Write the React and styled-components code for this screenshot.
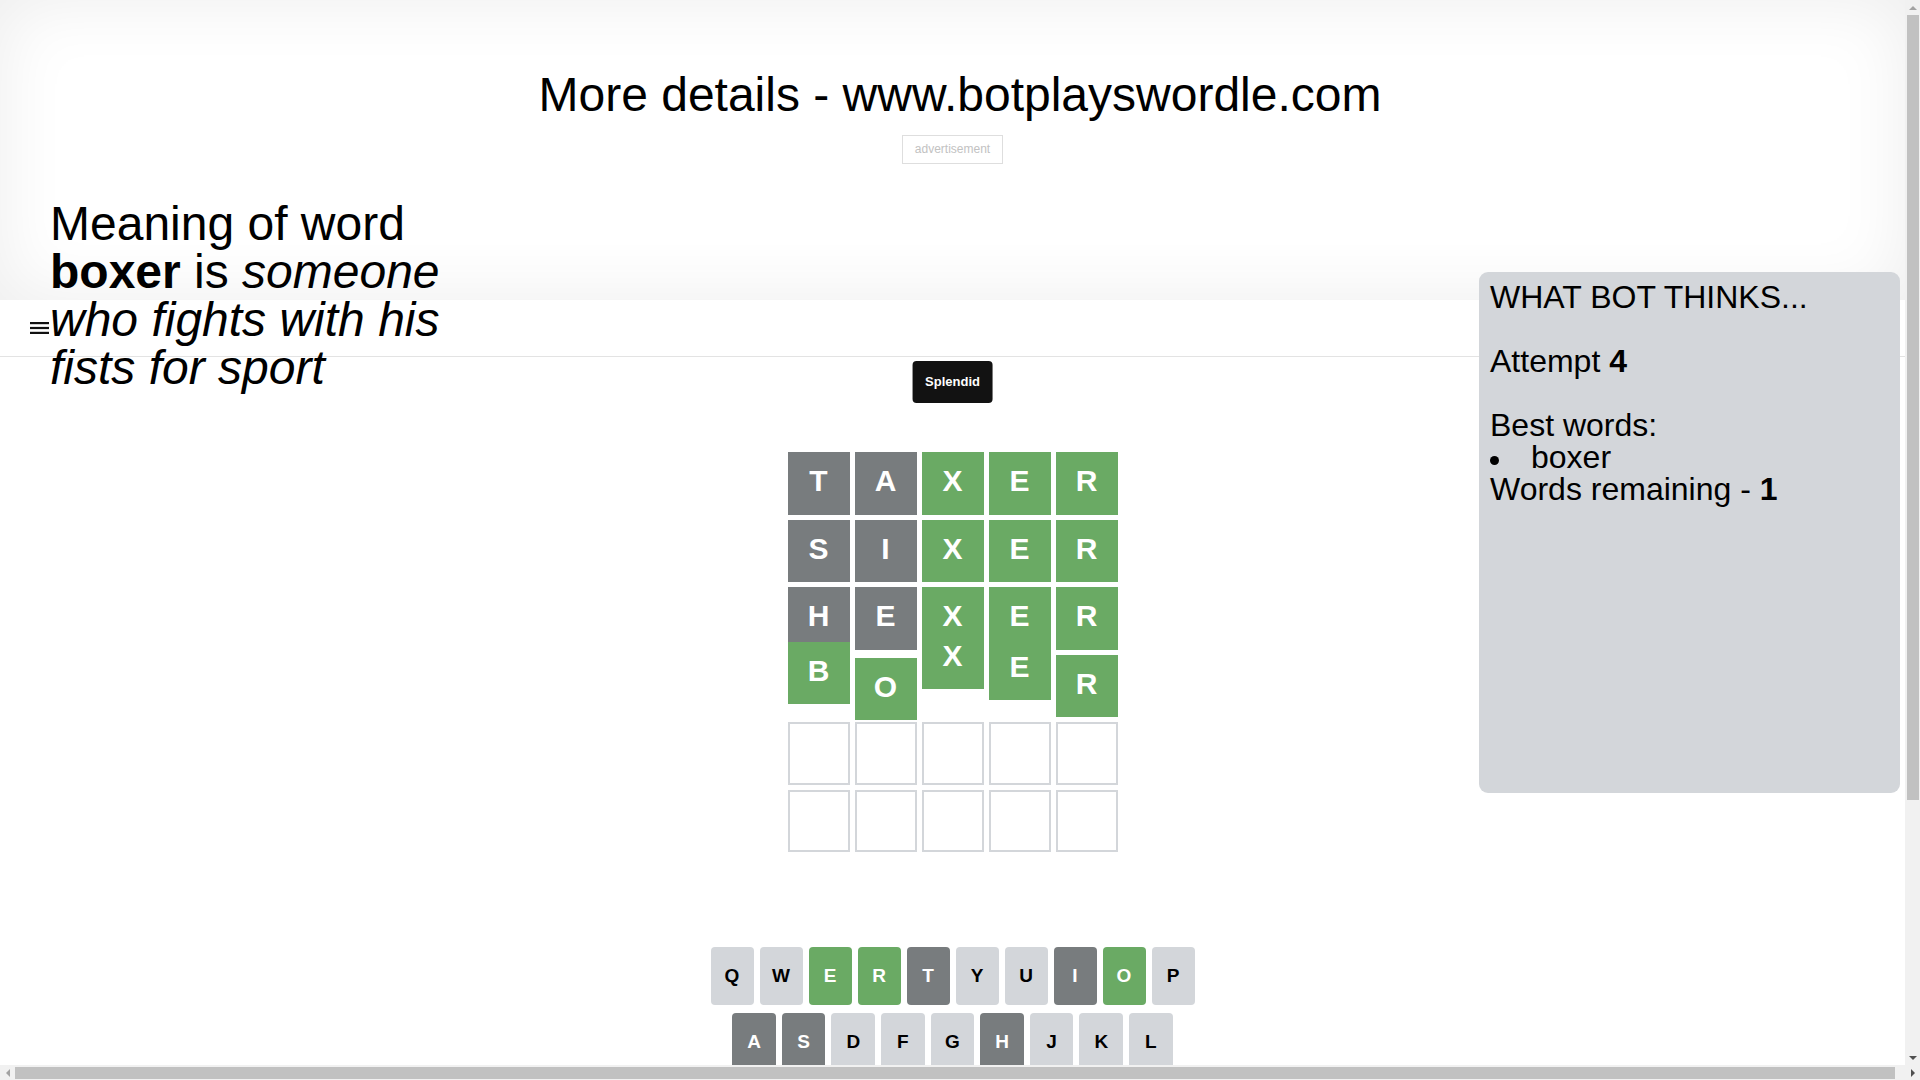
import React from 'react';
import styled, {createGlobalStyle} from 'styled-components';

const GlobalStyle = createGlobalStyle`
  body {
    margin: 0;
    font-family: "Liberation Sans", Arial, sans-serif;
    color: #000;
    background: #fff;
    overflow-x: hidden;
  }
`;

// page area as it sits beside the browser's vertical scrollbar
const Page = styled.div`
  position: relative;
  width: calc(100vw - 15px);
`;

const Header = styled.header`
  height: 300px;
  box-sizing: border-box;
  padding-top: 67px;
  display: flex;
  flex-direction: column;
  align-items: center;
  box-shadow: inset 0 0 70px rgba(0, 0, 0, 0.075);
`;

const Title = styled.h1`
  align-self: flex-start;
  width: 100vw;
  margin: 0;
  text-align: center;
  font-size: 48px;
  font-weight: 400;
  line-height: normal;
`;

const AdBox = styled.div`
  margin-top: 13px;
  padding: 6px 12px;
  border: 1px solid #dedede;
  color: #c2c2c2;
  font-size: 12px;
  line-height: 15px;
`;

const Meaning = styled.h2`
  position: absolute;
  top: 200px;
  left: 50px;
  width: 420px;
  margin: 0;
  font-size: 48px;
  font-weight: 400;
  line-height: 48px;

  b {
    font-weight: 700;
  }
`;

const Nav = styled.nav`
  height: 56px;
  border-bottom: 1px solid #e3e3e3;
  display: flex;
  align-items: center;
  padding-left: 30px;
`;

const BotPanel = styled.aside`
  position: absolute;
  top: 272px;
  right: 5px;
  width: 421px;
  height: 521px;
  box-sizing: border-box;
  padding: 9px 11px;
  background: #d3d6da;
  border-radius: 9px;
  font-size: 32px;
  line-height: 32px;

  ul {
    margin: 0;
    padding-left: 41px;
    list-style: none;
  }

  li {
    position: relative;
  }

  li::before {
    content: '';
    position: absolute;
    left: -41px;
    top: 15px;
    width: 9px;
    height: 9px;
    border-radius: 50%;
    background: #000;
  }
`;

const Toast = styled.div`
  position: absolute;
  top: 361px;
  left: 50%;
  transform: translateX(-50%);
  background: #121212;
  color: #fff;
  font-size: 13px;
  font-weight: 700;
  line-height: 16px;
  padding: 13px;
  border-radius: 4px;
`;

const Game = styled.main`
  display: flex;
  flex-direction: column;
  padding-bottom: 258px;
`;

const BoardArea = styled.div`
  height: 590px;
  display: flex;
  align-items: center;
  justify-content: center;
`;

const Board = styled.div`
  width: 330px;
  height: 400px;
  display: grid;
  grid-template-rows: repeat(6, 1fr);
  gap: 5px;
`;

const BoardRow = styled.div`
  display: grid;
  grid-template-columns: repeat(5, 1fr);
  gap: 5px;
`;

const palette = {
  absent: '#787c7e',
  correct: '#6aaa64',
};

const Tile = styled.div`
  position: relative;
  box-sizing: border-box;
  display: flex;
  align-items: center;
  justify-content: center;
  padding-bottom: 4px;
  font-size: 30px;
  font-weight: 700;
  color: #fff;
  text-transform: uppercase;
  background: ${(p) => (p.$state ? palette[p.$state] : '#fff')};
  border: ${(p) => (p.$state ? 'none' : '2px solid #d3d6da')};
  transform: translateY(${(p) => p.$shift || 0}px);
`;

const Keyboard = styled.div`
  width: 484px;
  margin: 0 auto;
  height: 200px;
`;

const KeyRow = styled.div`
  display: flex;
  gap: 6px;
  margin-bottom: 8px;
`;

const Spacer = styled.div`
  flex: 0.5;
  margin-right: -6px;

  &:last-child {
    margin-right: 0;
    margin-left: -6px;
  }
`;

const Key = styled.button`
  flex: ${(p) => (p.$wide ? 1.5 : 1)};
  height: 58px;
  border: 0;
  padding: 0;
  border-radius: 4px;
  font-family: "Liberation Sans", Arial, sans-serif;
  font-size: ${(p) => (p.$wide ? '12px' : '19px')};
  font-weight: 700;
  text-transform: uppercase;
  background: ${(p) => (p.$state ? palette[p.$state] : '#d3d6da')};
  color: ${(p) => (p.$state ? '#fff' : '#000')};
  display: flex;
  align-items: center;
  justify-content: center;
`;

const VScroll = styled.div`
  position: fixed;
  top: 0;
  right: 0;
  width: 15px;
  height: calc(100vh - 15px);
  background: #f1f1f1;
  display: flex;
  flex-direction: column;
  align-items: center;
`;

const HScroll = styled.div`
  position: fixed;
  left: 0;
  bottom: 0;
  width: 100vw;
  height: 15px;
  background: #f1f1f1;
  display: flex;
  align-items: center;
`;

const ArrowCell = styled.div`
  width: 15px;
  height: 15px;
  flex: none;
  display: flex;
  align-items: center;
  justify-content: center;
`;

const Arrow = styled.span`
  width: 0;
  height: 0;
  border: 4px solid transparent;
  ${(p) => p.$dir === 'up' && 'border-bottom: 4px solid #a3a3a3; margin-top: -4px;'}
  ${(p) => p.$dir === 'down' && 'border-top: 4px solid #505050; margin-bottom: -4px;'}
  ${(p) => p.$dir === 'left' && 'border-right: 4px solid #a3a3a3; margin-left: -4px;'}
  ${(p) => p.$dir === 'right' && 'border-left: 4px solid #505050; margin-right: -4px;'}
`;

const VThumb = styled.div`
  width: 12px;
  height: 785px;
  background: #c1c1c1;
`;

const HThumb = styled.div`
  flex: 1;
  height: 12px;
  margin-right: 10px;
  background: #c1c1c1;
`;

const rows = [
  [['t', 'absent'], ['a', 'absent'], ['x', 'correct'], ['e', 'correct'], ['r', 'correct']],
  [['s', 'absent'], ['i', 'absent'], ['x', 'correct'], ['e', 'correct'], ['r', 'correct']],
  [['h', 'absent'], ['e', 'absent'], ['x', 'correct'], ['e', 'correct'], ['r', 'correct']],
  [['b', 'correct', -13], ['o', 'correct', 3], ['x', 'correct', -28], ['e', 'correct', -17], ['r', 'correct', 0]],
  [],
  [],
];

const keyStates = {
  e: 'correct', r: 'correct', o: 'correct', x: 'correct', b: 'correct',
  t: 'absent', i: 'absent', a: 'absent', s: 'absent', h: 'absent',
};

function Hamburger() {
  return (
    <svg width="19" height="12" viewBox="0 0 19 12">
      <rect x="0" y="0" width="19" height="2.2" fill="#111" />
      <rect x="0" y="4.9" width="19" height="2.2" fill="#111" />
      <rect x="0" y="9.8" width="19" height="2.2" fill="#111" />
    </svg>
  );
}

function BackspaceIcon() {
  return (
    <svg width="24" height="24" viewBox="0 0 24 24">
      <path
        fill="#1a1a1b"
        d="M22 3H7c-.69 0-1.23.35-1.59.88L0 12l5.41 8.11c.36.53.9.89 1.59.89h15c1.1 0 2-.9 2-2V5c0-1.1-.9-2-2-2zm0 16H7.07L2.4 12l4.66-7H22v14zm-11.59-2L14 13.41 17.59 17 19 15.59 15.41 12 19 8.41 17.59 7 14 10.59 10.41 7 9 8.41 12.59 12 9 15.59z"
      />
    </svg>
  );
}

export default function App() {
  return (
    <Page>
      <GlobalStyle />
      <Header>
        <Title>More details - www.botplayswordle.com</Title>
        <AdBox>advertisement</AdBox>
      </Header>
      <Nav>
        <Hamburger />
      </Nav>

      <Meaning>
        Meaning of word <b>boxer</b> is <i>someone who fights with his fists for sport</i>
      </Meaning>

      <BotPanel>
        WHAT BOT THINKS...
        <br />
        <br />
        Attempt <b>4</b>
        <br />
        <br />
        Best words:
        <ul>
          <li>boxer</li>
        </ul>
        Words remaining - <b>1</b>
      </BotPanel>

      <Toast>Splendid</Toast>

      <Game>
        <BoardArea>
          <Board>
            {rows.map((row, r) => (
              <BoardRow key={'row' + r}>
                {[0, 1, 2, 3, 4].map((c) => {
                  const cell = row[c];
                  return (
                    <Tile key={'tile' + r + c} $state={cell && cell[1]} $shift={cell && cell[2]}>
                      {cell && cell[0]}
                    </Tile>
                  );
                })}
              </BoardRow>
            ))}
          </Board>
        </BoardArea>

        <Keyboard>
          <KeyRow>
            {'qwertyuiop'.split('').map((k) => (
              <Key key={k} $state={keyStates[k]}>{k}</Key>
            ))}
          </KeyRow>
          <KeyRow>
            <Spacer />
            {'asdfghjkl'.split('').map((k) => (
              <Key key={k} $state={keyStates[k]}>{k}</Key>
            ))}
            <Spacer />
          </KeyRow>
          <KeyRow>
            <Key $wide>enter</Key>
            {'zxcvbnm'.split('').map((k) => (
              <Key key={k} $state={keyStates[k]}>{k}</Key>
            ))}
            <Key $wide>
              <BackspaceIcon />
            </Key>
          </KeyRow>
        </Keyboard>
      </Game>

      <VScroll>
        <ArrowCell><Arrow $dir="up" /></ArrowCell>
        <VThumb />
        <div style={{flex: 1}} />
        <ArrowCell><Arrow $dir="down" /></ArrowCell>
      </VScroll>
      <HScroll>
        <ArrowCell><Arrow $dir="left" /></ArrowCell>
        <HThumb />
        <ArrowCell><Arrow $dir="right" /></ArrowCell>
      </HScroll>
    </Page>
  );
}
